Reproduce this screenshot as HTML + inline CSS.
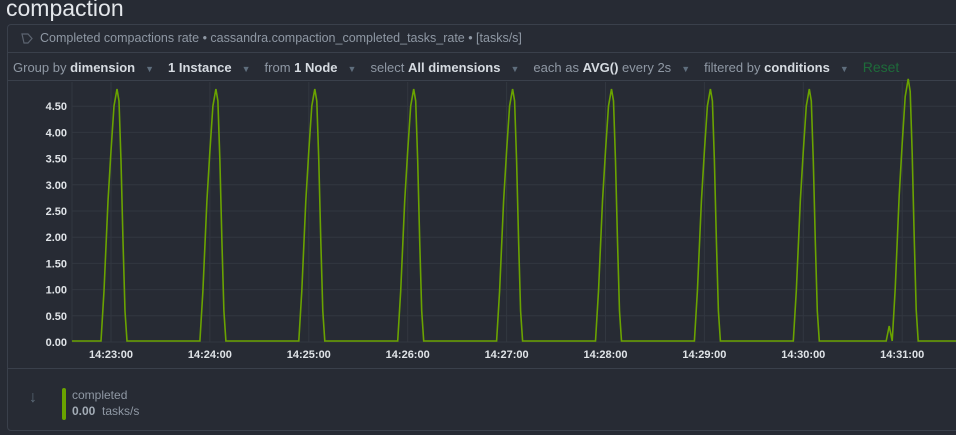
<!DOCTYPE html>
<html><head><meta charset="utf-8"><style>
*{margin:0;padding:0;box-sizing:border-box}
body{width:956px;height:435px;background:#272b34;font-family:"Liberation Sans",sans-serif;overflow:hidden;position:relative;color:#9aa3ae}
.title{position:absolute;left:6px;top:-5px;font-size:23px;color:#e4e7eb}
.panel{position:absolute;left:7px;top:24px;width:960px;height:407px;border:1px solid #3a404b;border-radius:4px}
.hdr{position:absolute;left:0;top:0;right:0;height:28px;border-bottom:1px solid #3a404b;font-size:12.5px;line-height:27px;padding-left:32px;color:#8f98a4}
.ctl{position:absolute;left:0;top:28px;right:0;height:28px;border-bottom:1px solid #3a404b;font-size:13px;line-height:28px;padding-left:5px;color:#8f98a4;white-space:nowrap}
.ctl b{color:#d6dbe1;font-weight:bold}
.ctl .v{color:#5f6e7d;font-size:9px;margin:0 14px 0 10px}
.reset{color:#1e6b3a;font-size:14px}
.leg{position:absolute;left:0;top:343px;right:0;border-top:1px solid #3a404b;height:64px}
</style></head><body>
<div class="title">compaction</div>
<div class="panel">
<div class="hdr"><svg style="position:absolute;left:13px;top:8px" width="12" height="11" viewBox="0 0 12 11"><path d="M1 1h6l4 4.5-4 4.5H3z" fill="none" stroke="#5c6470" stroke-width="1.2"/></svg>Completed compactions rate • cassandra.compaction_completed_tasks_rate • [tasks/s]</div>
<div class="ctl">Group by <b>dimension</b><span class="v">▼</span><b>1 Instance</b><span class="v">▼</span>from <b>1 Node</b><span class="v">▼</span>select <b>All dimensions</b><span class="v">▼</span>each as <b>AVG()</b> every 2s<span class="v">▼</span>filtered by <b>conditions</b><span class="v">▼</span><span class="reset">Reset</span></div>
<div class="leg">
<div style="position:absolute;left:21px;top:20px;color:#5c6a78;font-size:16px">↓</div>
<div style="position:absolute;left:54px;top:19px;width:4px;height:32px;background:#6aa300;border-radius:2px"></div>
<div style="position:absolute;left:64px;top:19px;font-size:12px;color:#8f98a4">completed</div>
<div style="position:absolute;left:64px;top:35px;font-size:12px;color:#8f98a4"><b style="color:#a3acb6">0.00</b>&nbsp; tasks/s</div>
</div>
</div>
<svg id="ch" style="position:absolute;left:0;top:0" width="956" height="370"></svg>
<script>
var s='',ns=document.getElementById('ch');
var lab=['0.00','0.50','1.00','1.50','2.00','2.50','3.00','3.50','4.00','4.50'];
for(var i=0;i<10;i++){var y=342-i*26.2;
s+='<line x1="72" x2="956" y1="'+y+'" y2="'+y+'" stroke="#323740"/>';
s+='<text x="67" y="'+(y+4)+'" text-anchor="end" font-size="11" font-weight="bold" fill="#e0e4e8" font-family="Liberation Sans">'+lab[i]+'</text>';}
s+='<line x1="72" x2="72" y1="82" y2="342" stroke="#323740"/>';
for(var k=0;k<9;k++){var gx=111+k*98.9;
s+='<line x1="'+gx+'" x2="'+gx+'" y1="82" y2="342" stroke="#323740"/>';
s+='<text x="'+gx+'" y="358" text-anchor="middle" font-size="11" font-weight="bold" fill="#e0e4e8" font-family="Liberation Sans">14:'+(23+k)+':00</text>';}
var pts='72,341';
var sh=[[-16,0],[-13,50],[-9,140],[-6,190],[-3,235],[0,252],[2,240],[4,180],[6,100],[8,30],[10,0]];
for(var k=0;k<9;k++){var px=117+k*98.9;var sc=k==8?1.04:1;
if(k==8)pts+=' '+(px-22)+',341 '+(px-19)+',326';
sh.forEach(function(p){pts+=' '+(px+p[0]).toFixed(1)+','+(341-p[1]*sc).toFixed(1);});}
pts+=' 956,341';
s+='<polyline points="'+pts+'" fill="none" stroke="#6aa300" stroke-width="1.6"/>';
ns.innerHTML=s;
</script>
</body></html>
